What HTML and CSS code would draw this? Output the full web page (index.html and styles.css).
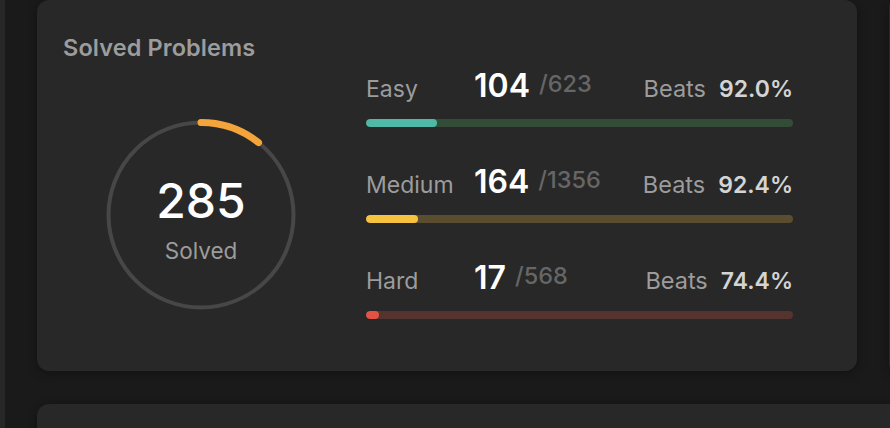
FILE: index.html
```html
<!DOCTYPE html>
<html lang="en">

<head>
    <meta charset="UTF-8">
    <meta name="viewport" content="width=device-width, initial-scale=1.0">
    <title>Solved Problems</title>
    <link rel="stylesheet" href="styles.css">
</head>

<body>
    <div class="layout">
        <aside class="sidebar"></aside>
        <main class="board">
            <!-- Solved problems summary -->
            <section class="card solved-card">
                <h2 class="card-title">Solved Problems</h2>
                <div class="solved-body">
                    <div class="ring">
                        <svg class="ring-svg" width="192" height="192" viewBox="0 0 192 192">
                            <circle cx="96" cy="96" r="92.5" fill="none" stroke="#474747" stroke-width="4" />
                            <circle cx="96" cy="96" r="92.5" fill="none" stroke="#f3a43b" stroke-width="7"
                                stroke-linecap="round" stroke-dasharray="62 600" transform="rotate(-90 96 96)" />
                        </svg>
                        <div class="ring-label">
                            <span class="ring-count">285</span>
                            <span class="ring-text">Solved</span>
                        </div>
                    </div>
                    <div class="levels">
                        <div class="level easy">
                            <div class="level-head">
                                <span class="level-name">Easy</span>
                                <span class="level-count">104<span class="level-total">/623</span></span>
                                <span class="beats">Beats</span>
                                <span class="beats-value">92.0%</span>
                            </div>
                            <div class="bar"><div class="bar-fill" style="width: 16.7%"></div></div>
                        </div>
                        <div class="level medium">
                            <div class="level-head">
                                <span class="level-name">Medium</span>
                                <span class="level-count">164<span class="level-total">/1356</span></span>
                                <span class="beats">Beats</span>
                                <span class="beats-value">92.4%</span>
                            </div>
                            <div class="bar"><div class="bar-fill" style="width: 12.1%"></div></div>
                        </div>
                        <div class="level hard">
                            <div class="level-head">
                                <span class="level-name">Hard</span>
                                <span class="level-count">17<span class="level-total">/568</span></span>
                                <span class="beats">Beats</span>
                                <span class="beats-value">74.4%</span>
                            </div>
                            <div class="bar"><div class="bar-fill" style="width: 3%"></div></div>
                        </div>
                    </div>
                </div>
            </section>
            <section class="card side-card"></section>
            <section class="card wide-card"></section>
        </main>
    </div>
</body>

</html>
```

FILE: styles.css
```css
* {
    margin: 0;
    padding: 0;
    box-sizing: border-box;
    font-family: 'Inter', 'Noto Sans', sans-serif;
}

body {
    background-color: #1a1a1a;
    height: 100vh;
    overflow: hidden;
}

.layout {
    display: flex;
    height: 100%;
    overflow: hidden;
}

.sidebar {
    width: 5px;
    flex-shrink: 0;
    background-color: #272727;
}

.board {
    flex: 1;
    display: grid;
    grid-template-columns: 820px 1fr;
    grid-template-rows: 371px 1fr;
    column-gap: 32px;
    row-gap: 33px;
    padding-left: 32px;
    margin-right: -12px;
    margin-bottom: -12px;
}

.card {
    background-color: #282828;
    border-radius: 12px;
    box-shadow: 0 2px 10px rgba(0, 0, 0, 0.35);
}

.solved-card {
    padding: 34px 64px 0 26px;
}

.wide-card {
    grid-column: 1 / 3;
}

.card-title {
    font-size: 23.5px;
    font-weight: 600;
    line-height: 28px;
    letter-spacing: 0.1px;
    color: #9c9c9c;
}

.solved-body {
    display: flex;
    margin-top: 2px;
}

.ring {
    position: relative;
    width: 192px;
    height: 192px;
    margin: 55px 0 0 42px;
}

.ring-svg {
    display: block;
}

.ring-label {
    position: absolute;
    inset: 0;
    padding-top: 10px;
    display: flex;
    flex-direction: column;
    align-items: center;
    justify-content: center;
}

.ring-count {
    font-size: 48px;
    font-weight: 500;
    line-height: 50px;
    color: #ffffff;
}

.ring-text {
    margin-top: 11px;
    font-size: 22.5px;
    line-height: 28px;
    color: #9c9c9c;
}

.levels {
    flex: 1;
    display: flex;
    flex-direction: column;
    gap: 33px;
    margin-left: 69px;
}

.level-head {
    display: flex;
    align-items: baseline;
    height: 40px;
    line-height: 40px;
}

.level-name {
    width: 108px;
    font-size: 23px;
    color: #9c9c9c;
}

.level-count {
    font-size: 32px;
    font-weight: 600;
    color: #ffffff;
}

.level-total {
    margin-left: 9px;
    font-size: 23.5px;
    font-weight: 500;
    color: #666666;
    vertical-align: 5px;
}

.beats {
    margin-left: auto;
    font-size: 23.5px;
    color: #9c9c9c;
}

.beats-value {
    margin-left: 13px;
    font-size: 23px;
    font-weight: 600;
    color: #d4d4d4;
}

.bar {
    height: 8px;
    margin-top: 15px;
    border-radius: 4px;
    overflow: hidden;
}

.bar-fill {
    height: 100%;
    border-radius: 4px;
}

.easy .bar {
    background-color: #334c38;
}

.easy .bar-fill {
    background-color: #4fb8a6;
}

.medium .bar {
    background-color: #5b4d2f;
}

.medium .bar-fill {
    background-color: #f7c33f;
}

.hard .bar {
    background-color: #55332f;
}

.hard .bar-fill {
    background-color: #e35345;
}
```
